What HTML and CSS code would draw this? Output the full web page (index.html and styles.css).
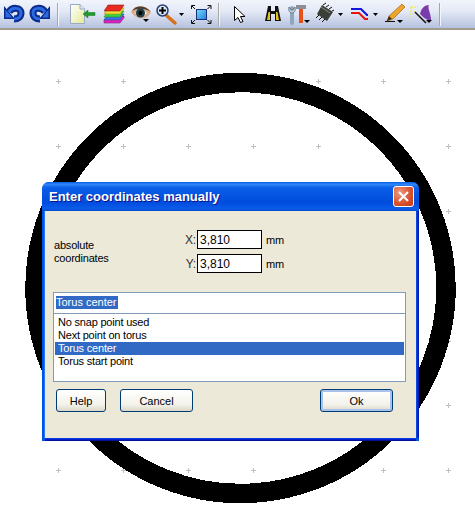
FILE: index.html
```html
<!DOCTYPE html>
<html lang="en">
<head>
    <meta charset="UTF-8">
    <title>Enter coordinates manually</title>
    <link rel="stylesheet" href="styles.css">
</head>
<body>

    <!-- Toolbar: every svg uses page coordinates in its viewBox -->
    <div class="toolbar">
        <svg width="25" height="28" viewBox="2 0 25 28"><path d="M9 12C12 7 21 7 21 13C21 17 18 19 14 19" class="arrow-out"/><path d="M4 6V19H15Z" fill="#0a2a8c"/><path d="M9 12C12 7 21 7 21 13C21 17 18 19 14 19" class="arrow-in"/><path d="M5.500 9.500V17.500H12Z" fill="#2a6be0"/></svg>
        <svg width="26" height="28" viewBox="27 0 26 28"><g transform="matrix(-1 0 0 1 54 0)"><path d="M9 12C12 7 21 7 21 13C21 17 18 19 14 19" class="arrow-out"/><path d="M4 6V19H15Z" fill="#0a2a8c"/><path d="M9 12C12 7 21 7 21 13C21 17 18 19 14 19" class="arrow-in"/><path d="M5.500 9.500V17.500H12Z" fill="#2a6be0"/></g></svg>
        <div class="sep"></div>
        <svg width="37" height="28" viewBox="60 0 37 28">
            <defs><linearGradient id="page" x1="0" y1="0" x2="1" y2="1"><stop offset="0" stop-color="#fff"/><stop offset="1" stop-color="#e2eb94"/></linearGradient></defs>
            <path d="M68.500 4.500H78L82.500 9V23.500H68.500Z" fill="url(#page)" stroke="#9aa8c4"/>
            <path d="M78 4.500V9H82.500" fill="#dfe6f2" stroke="#9aa8c4"/>
            <path d="M81 14L86 10V12.500H93V15.500H86V18Z" fill="#1f9a2c" stroke="#1a7a24" stroke-width=".5"/>
        </svg>
        <svg width="29" height="28" viewBox="97 0 29 28">
            <path d="M102 23L102 20L106 16H122V18L118 23Z" fill="#e81fc0" stroke="#7a2a80" stroke-width=".6"/>
            <path d="M102 20L106 14H122L118 20Z" fill="#3b6ff0" stroke="#28508c" stroke-width=".6"/>
            <path d="M102 17L106 11H122L118 17Z" fill="#3ed03a" stroke="#2a8a2a" stroke-width=".6"/>
            <path d="M102 14L106 8H122L118 14Z" fill="#f0e030" stroke="#a09020" stroke-width=".6"/>
            <path d="M102 11L106 5H122L118 11Z" fill="#e82a20" stroke="#902018" stroke-width=".6"/>
        </svg>
        <svg width="26" height="28" viewBox="126 0 26 28">
            <path d="M129 12C133 4 143 4 149 12C146 20 135 21 129 12Z" fill="#d8ae8e"/>
            <path d="M130 11C134 5 143 5 149 12C143 8 135 8 130 11Z" fill="#4a3a30"/>
            <path d="M133 13C136 9 142 9 145 13C142 17 136 17 133 13Z" fill="#f2f0ea"/>
            <circle cx="138.500" cy="13" r="4.500" fill="#1e3c44"/>
            <circle cx="138.500" cy="13" r="2" fill="#000"/>
            <path d="M141 19H147L144 22Z" fill="#000"/>
        </svg>
        <svg width="33" height="28" viewBox="152 0 33 28">
            <path d="M165 16L173 23" stroke="#d8701c" stroke-width="3.500" stroke-linecap="round"/>
            <circle cx="160.500" cy="10.500" r="5.500" fill="#dbe8f8" stroke="#27406e" stroke-width="1.500"/>
            <path d="M157 10.500H164M160.500 7V14" stroke="#000" stroke-width="2"/>
            <path d="M177 13H182L179.500 16Z" fill="#000"/>
        </svg>
        <svg width="27" height="28" viewBox="185 0 27 28">
            <defs><linearGradient id="fit" x1="0" y1="0" x2="1" y2="1"><stop offset="0" stop-color="#6fe0f0"/><stop offset="1" stop-color="#2a7ae8"/></linearGradient></defs>
            <rect x="194.500" y="9.500" width="10" height="10" fill="url(#fit)" stroke="#14307a"/>
            <path d="M189.500 9V5.500H193M190 6L193 9M209 9V5.500H205.500M208.500 6L205.500 9M189.500 20V23.500H193M190 23L193 20M209 20V23.500H205.500M208.500 23L205.500 20" fill="none" stroke="#111"/>
        </svg>
        <div class="sep"></div>
        <svg width="38" height="28" viewBox="220 0 38 28"><path d="M231.500 6.500V20.500L235 17.500L237.500 22.500L240 21.500L237.500 16.500H242Z" fill="#fff" stroke="#000"/></svg>
        <svg width="25" height="28" viewBox="258 0 25 28">
            <path d="M265 6H268V11H272V6H275L278 21H272V14H268V21H262Z" fill="#111"/>
            <path d="M264 20L265.500 12H267V20ZM273 12H274.500L276 20H273Z" fill="#e8c21a"/>
        </svg>
        <svg width="26" height="28" viewBox="283 0 26 28">
            <path d="M289 8V23" stroke="#8fa6bc" stroke-width="4" stroke-linecap="round"/>
            <path d="M286 7L288 10H290L292 7C293 11 291 13 289 13C287 13 285 11 286 7Z" fill="#c4d0dc" stroke="#4a5a70" stroke-width=".7"/>
            <path d="M296 9H300V23H296Z" fill="#e8501c"/>
            <path d="M293 5H303V9H293Z" fill="#8a8f98"/>
            <path d="M301 20H307L304 23Z" fill="#000"/>
        </svg>
        <svg width="35" height="28" viewBox="309 0 35 28">
            <path d="M319 5L330 12L324 21L314 14Z" fill="#3a3f38"/>
            <path d="M318 7L327 13" stroke="#8a9088"/>
            <path d="M316 15L313 18M319 17L316 20M322 19L319 22M320 5L323 3M323 7L326 5M326 9L329 7M329 11L331 10" stroke="#111"/>
            <path d="M335 13H340L337.500 16Z" fill="#000"/>
        </svg>
        <svg width="35" height="28" viewBox="344 0 35 28">
            <path d="M348 9H358L364 15H365" fill="none" stroke="#1414e0" stroke-width="2"/>
            <path d="M348 13H356L362 19H365" fill="none" stroke="#e81414" stroke-width="2"/>
            <path d="M370 13H375L372.500 16Z" fill="#000"/>
        </svg>
        <svg width="26" height="28" viewBox="379 0 26 28">
            <path d="M399 4L402 7L390 19L384 21L386 16Z" fill="#eda52c" stroke="#a8661a" stroke-width=".7"/>
            <path d="M384 21L386 16L389 19Z" fill="#3a2a18"/>
            <path d="M382 21.500H392" stroke="#111"/>
            <path d="M394 20H400L397 23Z" fill="#000"/>
        </svg>
        <svg width="27" height="28" viewBox="405 0 27 28">
            <path d="M408 7H415M408 7V17M411 11L413 13" stroke="#f0e820" stroke-dasharray="2 1"/>
            <path d="M417 14C418 9 421 5 426 5C424 8 428 13 428 20C425 21 421 18 417 14Z" fill="#7a3ca8"/>
            <path d="M412 12L423 23" stroke="#111" stroke-width="1.500"/>
            <path d="M423 20H429L426 23Z" fill="#000"/>
        </svg>
        <div class="sep"></div>
    </div>

    <!-- Drawing area with snap grid and torus -->
    <div class="canvas">
        <svg class="drawing" width="475" height="492" viewBox="0 30 475 492">
            <path class="grid" d="M56 81.500h5M121 81.500h5M186 81.500h5M251 81.500h5M316 81.500h5M381 81.500h5M446 81.500h5
                M58.500 79v5M123.500 79v5M188.500 79v5M253.500 79v5M318.500 79v5M383.500 79v5M448.500 79v5
                M56 146.500h5M121 146.500h5M186 146.500h5M251 146.500h5M316 146.500h5M381 146.500h5M446 146.500h5
                M58.500 144v5M123.500 144v5M188.500 144v5M253.500 144v5M318.500 144v5M383.500 144v5M448.500 144v5
                M446 211.500h5M448.500 209v5M446 276.500h5M448.500 274v5M446 341.500h5M448.500 339v5M446 405.500h5M448.500 403v5
                M56 470.500h5M121 470.500h5M186 470.500h5M251 470.500h5M316 470.500h5M381 470.500h5M446 470.500h5
                M58.500 468v5M123.500 468v5M188.500 468v5M253.500 468v5M318.500 468v5M383.500 468v5M448.500 468v5"/>
            <circle class="torus" cx="240.500" cy="288" r="205.500"/>
        </svg>

        <div class="dialog">
            <div class="titlebar">
                <span class="title">Enter coordinates manually</span>
                <div class="close"><svg width="11" height="11" viewBox="0 0 11 11"><path d="M1 1L10 10M10 1L1 10" stroke="#fff" stroke-width="2"/></svg></div>
            </div>
            <div class="client">
                <div class="coords">
                    <div class="coords-label">absolute<br>coordinates</div>
                    <div class="coords-fields">
                        <div class="field"><label>X:</label><input type="text" value="3,810"><span>mm</span></div>
                        <div class="field"><label>Y:</label><input type="text" value="3,810"><span>mm</span></div>
                    </div>
                </div>
                <div class="combo"><span class="combo-text">Torus center</span></div>
                <ul class="list">
                    <li>No snap point used</li>
                    <li>Next point on torus</li>
                    <li class="selected">Torus center</li>
                    <li>Torus start point</li>
                </ul>
                <div class="buttons">
                    <button class="btn btn-help">Help</button>
                    <button class="btn btn-wide">Cancel</button>
                    <button class="btn btn-wide btn-default">Ok</button>
                </div>
            </div>
        </div>
    </div>

</body>
</html>
```

FILE: styles.css
```css
/* General Styles */
body {
    margin: 0;
    width: 475px;
    height: 522px;
    overflow: hidden;
    background: #fff;
    font-family: 'Liberation Sans', Arial, sans-serif;
    font-size: 11px;
    letter-spacing: -.2px;
    color: #000;
}

/* Toolbar */
.toolbar {
    display: flex;
    height: 28px;
    padding-left: 2px;
    background: linear-gradient(#f1f4fb, #e4e9f6 40%, #b5c1de);
    border-bottom: 2px solid #a09c90;
}

.toolbar svg {
    display: block;
    flex: none;
}

.sep {
    flex: none;
    width: 1px;
    height: 23px;
    margin: 3px 3px 0 4px;
    background: #a8a8a0;
    border-right: 1px solid #f4f6fc;
}

.arrow-out {
    fill: none;
    stroke: #0a2a8c;
    stroke-width: 7;
}

.arrow-in {
    fill: none;
    stroke: #2a6be0;
    stroke-width: 3;
}

/* Drawing */
.canvas {
    position: relative;
    height: 492px;
}

.drawing {
    display: block;
}

.grid {
    fill: none;
    stroke: #c0c0c0;
    shape-rendering: crispEdges;
}

.torus {
    fill: none;
    stroke: #000;
    stroke-width: 19.5;
    shape-rendering: crispEdges;
}

/* Dialog window */
.dialog {
    position: absolute;
    left: 42px;
    top: 152px;
    width: 377px;
    height: 259px;
    display: flex;
    flex-direction: column;
    border-radius: 7px 7px 0 0;
    background: #0054e3;
    overflow: hidden;
}

.titlebar {
    display: flex;
    align-items: center;
    justify-content: space-between;
    height: 29px;
    flex: none;
    padding: 0 5px 0 7px;
    background: linear-gradient(#0a5ae6, #2f86f8 8%, #0a5fe8 20%, #004cdc 70%, #0a5cea 92%, #0048c8);
}

.title {
    font-size: 13px;
    font-weight: bold;
    letter-spacing: 0;
    color: #fff;
    text-shadow: 1px 1px #0f1089;
}

.close {
    display: flex;
    align-items: center;
    justify-content: center;
    width: 19px;
    height: 19px;
    border: 1px solid #fff;
    border-radius: 3px;
    background: radial-gradient(circle at 30% 30%, #ec9a80, #d8502c 60%, #c03a14);
}

.client {
    flex: 1;
    margin: 0 3px 3px;
    padding: 0 10px 0 8px;
    background: #ece9d8;
    box-shadow: 0 1px #0a3ae8, 0 2px #0022c8, 0 3px #00129c, -1px 0 #2a78f8, 1px 0 #0848e0, 2px 0 #0030c8, 3px 0 #0018b0;
}

/* Coordinates */
.coords {
    display: flex;
    height: 81px;
}

.coords-label {
    width: 127px;
    margin-left: 1px;
    padding-top: 28px;
    line-height: 13px;
}

.coords-fields {
    display: flex;
    flex-direction: column;
    gap: 5px;
    padding-top: 19px;
}

.field {
    display: flex;
    align-items: center;
    height: 19px;
}

.field label {
    width: 15px;
    margin-right: 1px;
    text-align: right;
    font-size: 12px;
    color: #333;
}

.field input {
    box-sizing: border-box;
    width: 65px;
    height: 19px;
    padding: 0 2px;
    border: 1px solid #000;
    background: #fff;
    font: 12px 'Liberation Sans', Arial, sans-serif;
    outline: none;
}

.field span {
    margin-left: 4px;
}

/* Snap point combo and list */
.combo {
    box-sizing: border-box;
    height: 22px;
    padding: 3px 2px;
    border: 1px solid #7f9db9;
    background: #fff;
    letter-spacing: 0;
}

.combo-text {
    display: inline-block;
    height: 13px;
    line-height: 12px;
    padding-right: 1px;
    background: #316ac5;
    color: #fff;
}

.list {
    box-sizing: border-box;
    height: 69px;
    margin: -1px 0 0;
    padding: 2px 1px;
    list-style: none;
    border: 1px solid #7f9db9;
    background: #fff;
}

.list li {
    height: 13px;
    padding-left: 3px;
    line-height: 13px;
}

.list .selected {
    background: #316ac5;
    color: #fff;
}

/* Buttons */
.buttons {
    display: flex;
    gap: 14px;
    margin-top: 7px;
    padding: 0 13px 0 3px;
}

.btn {
    box-sizing: border-box;
    height: 23px;
    padding: 0;
    border: 1px solid #003c74;
    border-radius: 3px;
    background: linear-gradient(#fff, #f3f2ea 70%, #dcd8c8);
    font: 11px 'Liberation Sans', Arial, sans-serif;
    color: #000;
}

.btn-help {
    width: 50px;
}

.btn-wide {
    width: 73px;
}

.btn-default {
    margin-left: auto;
    box-shadow: inset 0 0 0 2px #a9c2ec;
}
```
